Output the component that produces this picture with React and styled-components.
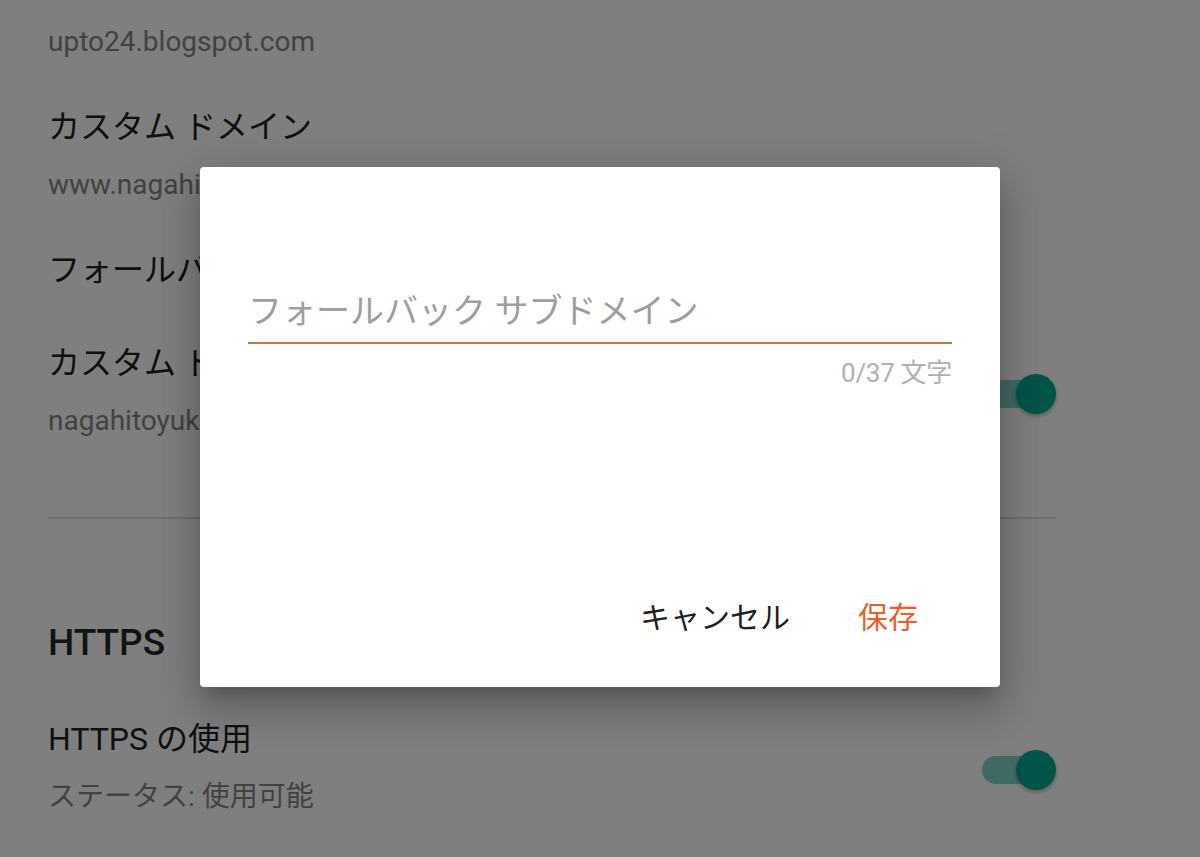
import React from "react";
import styled, { createGlobalStyle } from "styled-components";

const GlobalStyle = createGlobalStyle`
  html, body { margin: 0; padding: 0; background: #ffffff; }
  body {
    width: 1200px;
    height: 857px;
    overflow: hidden;
    font-family: Roboto, "Noto Sans CJK JP", sans-serif;
  }
`;

const Screen = styled.div`
  position: relative;
  width: 1200px;
  height: 857px;
  overflow: hidden;
  background: #ffffff;
`;

const Settings = styled.div`
  display: flex;
  flex-direction: column;
  padding: 0 144px 0 48px;
`;

const Item = styled.div`
  display: flex;
  align-items: center;
  justify-content: space-between;
  padding: ${(p) => p.$pad || "20px 0"};
`;

const ItemText = styled.div`
  display: flex;
  flex-direction: column;
  gap: 16px;
`;

const Title = styled.div`
  padding-top: 3px;
  font-size: 32px;
  line-height: 44px;
  color: #212121;
  white-space: nowrap;
`;

const Sub = styled.div`
  font-size: 28px;
  line-height: 40px;
  color: #858585;
  white-space: nowrap;
`;

const Divider = styled.hr`
  border: none;
  border-top: 2px solid #dedede;
  margin: 56px 0 0;
`;

const SectionHeader = styled.h2`
  margin: 100px 0 27px;
  font-size: 37px;
  line-height: 48px;
  font-weight: 500;
  color: #1f2a2a;
`;

const Switch = styled.div`
  position: relative;
  width: 74px;
  height: 40px;
  margin-top: ${(p) => p.$shift || 0}px;
  flex-shrink: 0;
`;

const Track = styled.div`
  position: absolute;
  left: 0;
  top: 6px;
  width: 58px;
  height: 28px;
  border-radius: 14px;
  background: rgba(0, 170, 146, 0.5);
`;

const Thumb = styled.div`
  position: absolute;
  right: 0;
  top: 0;
  width: 40px;
  height: 40px;
  border-radius: 50%;
  background: #00a890;
  box-shadow: 0 2px 4px rgba(0, 0, 0, 0.3);
`;

const Scrim = styled.div`
  position: absolute;
  inset: 0;
  background: rgba(0, 0, 0, 0.5);
  display: flex;
  justify-content: center;
  align-items: flex-start;
  padding-top: 167px;
`;

const Dialog = styled.div`
  width: 800px;
  height: 520px;
  box-sizing: border-box;
  background: #ffffff;
  border-radius: 4px;
  display: flex;
  flex-direction: column;
  padding: 120px 48px 49px;
  box-shadow: 0 24px 38px 3px rgba(0, 0, 0, 0.14),
    0 9px 46px 8px rgba(0, 0, 0, 0.12), 0 11px 15px -7px rgba(0, 0, 0, 0.2);
`;

const Field = styled.div`
  display: flex;
  flex-direction: column;
  flex: 1;
`;

const Input = styled.input`
  border: none;
  outline: none;
  border-bottom: 2px solid #d2703f;
  padding: 0 0 7px;
  margin: 0;
  font-family: Roboto, "Noto Sans CJK JP", sans-serif;
  font-size: 34px;
  line-height: 48px;
  height: 57px;
  box-sizing: border-box;
  color: #212121;
  background: transparent;
  &::placeholder {
    color: #9e9e9e;
  }
`;

const Counter = styled.div`
  margin-top: 13px;
  align-self: flex-end;
  font-size: 26px;
  line-height: 32px;
  color: #b0b0b0;
  letter-spacing: -0.3px;
`;

const Actions = styled.div`
  display: flex;
  justify-content: flex-end;
`;

const Button = styled.button`
  border: none;
  background: transparent;
  padding: 0 34px;
  font-family: Roboto, "Noto Sans CJK JP", sans-serif;
  font-size: 30px;
  line-height: 40px;
  color: ${(p) => (p.$primary ? "#e5602a" : "#212121")};
  cursor: pointer;
`;

export default function App() {
  return (
    <>
      <GlobalStyle />
      <Screen>
        <Settings>
          <Item $pad="22px 0 20px">
            <ItemText>
              <Sub>upto24.blogspot.com</Sub>
            </ItemText>
          </Item>
          <Item>
            <ItemText>
              <Title>カスタム ドメイン</Title>
              <Sub>www.nagahitoyuki.com</Sub>
            </ItemText>
          </Item>
          <Item $pad="20px 0 26px">
            <ItemText>
              <Title>フォールバック サブドメイン</Title>
            </ItemText>
          </Item>
          <Item>
            <ItemText>
              <Title>カスタム ドメインへのリダイレクト</Title>
              <Sub>nagahitoyuki.com</Sub>
            </ItemText>
            <Switch $shift={9}>
              <Track />
              <Thumb />
            </Switch>
          </Item>
          <Divider />
          <SectionHeader>HTTPS</SectionHeader>
          <Item>
            <ItemText>
              <Title>HTTPS の使用</Title>
              <Sub>ステータス: 使用可能</Sub>
            </ItemText>
            <Switch $shift={8}>
              <Track />
              <Thumb />
            </Switch>
          </Item>
        </Settings>
        <Scrim>
          <Dialog>
            <Field>
              <Input placeholder="フォールバック サブドメイン" />
              <Counter>0/37 文字</Counter>
            </Field>
            <Actions>
              <Button>キャンセル</Button>
              <Button $primary>保存</Button>
            </Actions>
          </Dialog>
        </Scrim>
      </Screen>
    </>
  );
}
